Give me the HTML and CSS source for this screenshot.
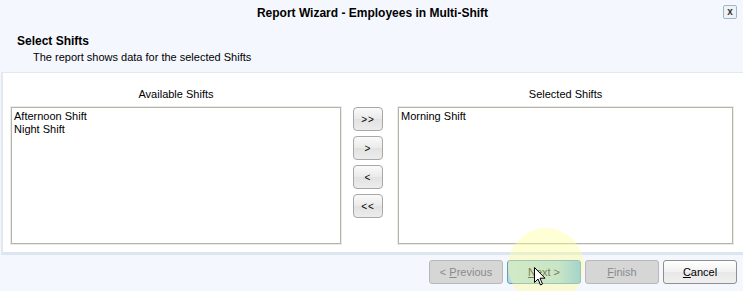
FILE: index.html
```html
<!DOCTYPE html>
<html lang="en">

<head>
    <meta charset="UTF-8">
    <title>Report Wizard - Employees in Multi-Shift</title>
    <link rel="stylesheet" href="styles.css">
</head>

<body>
    <div class="wizard">
        <div class="titlebar">
            <span class="title">Report Wizard - Employees in Multi-Shift</span>
            <span class="close">x</span>
        </div>
        <div class="intro">
            <div class="step">Select Shifts</div>
            <div class="desc">The report shows data for the selected Shifts</div>
        </div>
        <div class="panel">
            <div class="col col-left">
                <div class="caption">Available Shifts</div>
                <ul class="list">
                    <li>Afternoon Shift</li>
                    <li>Night Shift</li>
                </ul>
            </div>
            <div class="moves">
                <button class="move">&gt;&gt;</button>
                <button class="move">&gt;</button>
                <button class="move">&lt;</button>
                <button class="move">&lt;&lt;</button>
            </div>
            <div class="col col-right">
                <div class="caption">Selected Shifts</div>
                <ul class="list">
                    <li>Morning Shift</li>
                </ul>
            </div>
        </div>
        <div class="footer">
            <button class="btn off">&lt; <u>P</u>revious</button>
            <button class="btn hover"><u>N</u>ext &gt;</button>
            <button class="btn off"><u>F</u>inish</button>
            <button class="btn"><u>C</u>ancel</button>
            <!-- 鼠标高亮和指针 -->
            <span class="glow"></span>
            <svg class="cursor" width="12" height="19" viewBox="0 0 12 19">
                <path d="M0.5 0.5 L0.5 15.5 L4 12 L6.5 18 L8.5 17 L6 11.2 L11 11.2 Z" fill="#fff" stroke="#000" stroke-width="1"/>
            </svg>
        </div>
    </div>
</body>

</html>
```

FILE: styles.css
```css
body {
    margin: 0;
    background: #f5f7fe;
    font: 11px "Liberation Sans", Arial, sans-serif;
    color: #000;
}

.wizard {
    width: 743px;
    height: 291px;
    overflow: hidden;
}

.titlebar {
    height: 25px;
    display: flex;
    align-items: center;
    justify-content: center;
    position: relative;
}

.title {
    font-weight: bold;
    font-size: 12px;
    padding-left: 2px;
}

.close {
    position: absolute;
    right: 6px;
    top: 5px;
    width: 12px;
    height: 12px;
    border: 1px solid #9fb8c8;
    border-radius: 2px;
    background: #eef3f7;
    font-size: 10px;
    font-weight: bold;
    line-height: 11px;
    text-align: center;
    color: #333;
}

.intro {
    height: 47px;
    padding: 9px 0 0 17px;
    box-sizing: border-box;
}

.step {
    font-weight: bold;
    font-size: 12px;
}

.desc {
    padding-left: 16px;
    margin-top: 3px;
}

.panel {
    margin-left: 1px;
    width: 742px;
    height: 183px;
    box-sizing: border-box;
    background: #fff;
    border-top: 1px solid #e2e8f0;
    border-left: 2px solid #e2e8f0;
    border-bottom: 3px solid #dce6f1;
    display: flex;
    padding: 15px 0 0 8px;
}

.col {
    display: flex;
    flex-direction: column;
}

.col-left {
    width: 330px;
}

.col-right {
    width: 335px;
}

.caption {
    text-align: center;
    height: 19px;
}

.list {
    margin: 0;
    padding: 2px 2px;
    list-style: none;
    height: 137px;
    box-sizing: border-box;
    border: 1px solid #b4b4ac;
    box-shadow: 0 0 0 1px #ecece4;
}

.list li {
    line-height: 13px;
}

.moves {
    width: 30px;
    margin: 19px 15px 0 12px;
    display: flex;
    flex-direction: column;
    gap: 5px;
}

.move {
    width: 30px;
    height: 24px;
    padding: 0;
    border: 1px solid #a8a8a8;
    border-radius: 4px;
    background: linear-gradient(#fafafa, #eaeaea 50%, #e2e2e2 51%, #ececec);
    font: 10px "Liberation Sans", Arial, sans-serif;
    letter-spacing: 1px;
    color: #000;
}

.footer {
    position: relative;
    display: flex;
    justify-content: flex-end;
    gap: 4px;
    padding: 5px 6px 0 0;
}

.btn {
    width: 74px;
    height: 24px;
    padding: 0;
    border: 1px solid #8f8f8f;
    border-radius: 3px;
    background: linear-gradient(#fff, #f1f1f1 50%, #e8e8e8 51%, #efefef);
    font: 11px "Liberation Sans", Arial, sans-serif;
    color: #000;
}

.btn.off {
    border-color: #b8b8b8;
    background: #d6d6d6;
    color: #8a8a8a;
}

.btn.hover {
    border-color: #5d9fc0;
    background: linear-gradient(90deg, #b5dbe4, #a4d4e6 70%, #6ab8ee);
    color: #222;
}

.glow {
    position: absolute;
    left: 508px;
    top: -27px;
    width: 76px;
    height: 76px;
    border-radius: 50%;
    background: rgba(255, 255, 150, 0.4);
    pointer-events: none;
}

.cursor {
    position: absolute;
    left: 534px;
    top: 12px;
}
```
